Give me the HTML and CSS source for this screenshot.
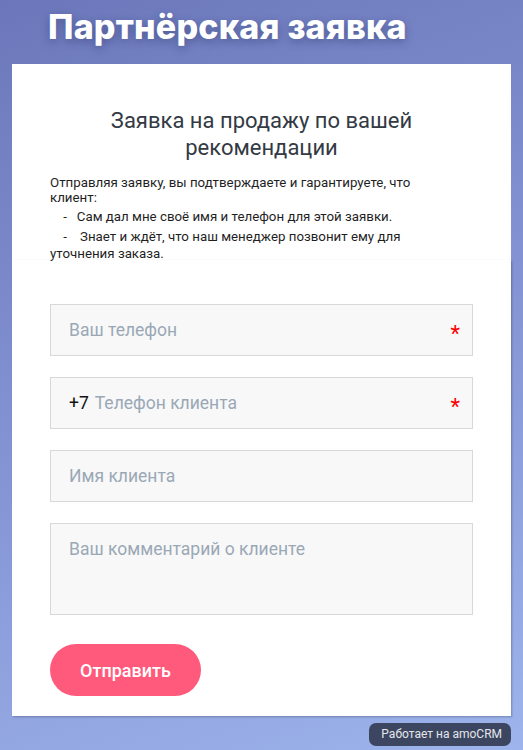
FILE: index.html
```html
<!DOCTYPE html>
<html lang="ru">
<head>
<meta charset="utf-8">
<title>Партнёрская заявка</title>
<link rel="stylesheet" href="styles.css">
</head>
<body>
<div class="page">
  <h1 class="page-title">Партнёрская заявка</h1>
  <div class="card">
    <div class="card-head">
      <h2 class="form-title">Заявка на продажу по вашей рекомендации</h2>
      <div class="note">
        <p>Отправляя заявку, вы подтверждаете и гарантируете, что<br>клиент:</p>
        <p class="item">&nbsp;&nbsp;&nbsp; -&nbsp;&nbsp; Сам дал мне своё имя и телефон для этой заявки.</p>
        <p class="item">&nbsp;&nbsp;&nbsp; -&nbsp;&nbsp;&nbsp; Знает и ждёт, что наш менеджер позвонит ему для<br>уточнения заказа.</p>
      </div>
    </div>
    <div class="card-form">
      <div class="field"><span class="ph">Ваш телефон</span><span class="req">*</span></div>
      <div class="field"><span class="prefix">+7</span><span class="ph">Телефон клиента</span><span class="req">*</span></div>
      <div class="field"><span class="ph">Имя клиента</span></div>
      <div class="field area"><span class="ph">Ваш комментарий о клиенте</span></div>
      <button class="submit" type="button">Отправить</button>
    </div>
  </div>
  <div class="footer"><span class="badge">Работает на amoCRM</span></div>
</div>
</body>
</html>
```

FILE: styles.css
```css
* { box-sizing: border-box; }
html, body { margin: 0; padding: 0; }
body {
  width: 523px;
  height: 750px;
  overflow: hidden;
  background: linear-gradient(160deg, #6b77ba 0%, #8797d6 55%, #9db4ec 100%);
  font-family: Roboto, "Noto Sans", sans-serif;
}
.page { padding: 0 12px; }
.page-title {
  margin: 0;
  height: 64px;
  padding: 7px 0 0 36px;
  font-family: Inter, "Open Sans", sans-serif;
  font-weight: 800;
  font-size: 34px;
  line-height: 40px;
  letter-spacing: 0.2px;
  color: #ffffff;
  text-shadow: 0 3px 8px rgba(40, 50, 100, 0.45);
}
.card { background: #fff; }
.card-head { padding: 43px 38px 0 38px; height: 196px; }
.form-title {
  margin: 0 0 14px;
  text-align: center;
  font-weight: 400;
  font-size: 22px;
  line-height: 27px;
  color: #333a44;
  padding: 0 40px;
}
.note { font-size: 13.3px; line-height: 15px; color: #1f1f1f; white-space: nowrap; }
.note p { margin: 0; }
.note .item { margin-top: 3px; line-height: 17px; }
.card-form {
  padding: 44px 38px 20px;
  display: flex;
  flex-direction: column;
  gap: 21px;
  box-shadow: 1px 1px 2px rgba(0,0,0,0.25);
}
.field {
  height: 52px;
  background: #f8f8f8;
  border: 1px solid #d8d8d8;
  display: flex;
  align-items: center;
  padding: 0 12px 0 18px;
  font-size: 17.5px;
}
.field.area { height: 92px; align-items: flex-start; padding-top: 15px; }
.ph { color: #9aa8b6; flex: 1; }
.prefix { color: #111; margin-right: 6px; }
.req { color: #ff0000; font-size: 22px; line-height: 1; margin-top: 8px; }
.submit {
  align-self: flex-start;
  width: 151px;
  height: 52px;
  margin-top: 8px;
  border: 0;
  border-radius: 26px;
  background: #ff5a7b;
  color: #fff;
  font-family: Roboto, sans-serif;
  font-weight: 500;
  font-size: 18px;
}
.footer { display: flex; justify-content: flex-end; padding-top: 7px; }
.badge {
  background: #3c4660;
  color: #e4e6ec;
  font-size: 12px;
  line-height: 23px;
  padding: 0 9px 0 12px;
  border-radius: 7px;
}
```
